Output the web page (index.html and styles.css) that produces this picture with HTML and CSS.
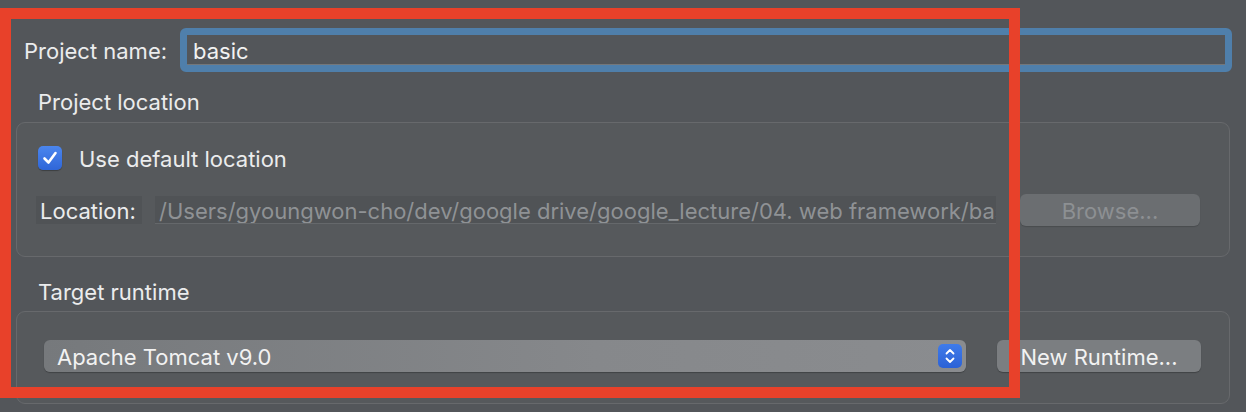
FILE: index.html
```html
<!DOCTYPE html>
<html>
<head>
<meta charset="utf-8">
<link rel="stylesheet" href="styles.css">
</head>
<body>
<div class="dialog">
  <div class="name-row">
    <span class="label">Project name:</span>
    <div class="name-input"><span>basic</span></div>
  </div>
  <div class="section-title">Project location</div>
  <div class="group group-location">
    <div class="check-row">
      <span class="checkbox">
        <svg width="24" height="24" viewBox="0 0 24 24"><path d="M6.5 12.5 L10.5 16.5 L17.5 7" fill="none" stroke="#fff" stroke-width="2.6" stroke-linecap="round" stroke-linejoin="round"/></svg>
      </span>
      <span class="check-label">Use default location</span>
    </div>
    <div class="loc-row">
      <span class="loc-label">Location:</span>
      <div class="loc-field"><span>/Users/gyoungwon-cho/dev/google drive/google_lecture/04. web framework/basic</span></div>
      <button class="btn btn-disabled">Browse...</button>
    </div>
  </div>
  <div class="section-title section-runtime">Target runtime</div>
  <div class="group group-runtime">
    <div class="runtime-row">
      <div class="select">
        <span>Apache Tomcat v9.0</span>
        <span class="stepper">
          <svg width="24" height="24" viewBox="0 0 24 24"><path d="M8.5 9.5 L12 6 L15.5 9.5 M8.5 14.5 L12 18 L15.5 14.5" fill="none" stroke="#fff" stroke-width="1.8" stroke-linecap="round" stroke-linejoin="round"/></svg>
        </span>
      </div>
      <button class="btn btn-runtime">New Runtime...</button>
    </div>
  </div>
  <div class="highlight"></div>
</div>
</body>
</html>
```
FILE: styles.css
```css
* { box-sizing: border-box; }
html, body {
  margin: 0;
  padding: 0;
  background: #53565a;
}
body {
  width: 1246px;
  height: 412px;
  overflow: hidden;
  font-family: "Inter", "Liberation Sans", sans-serif;
  font-size: 22px;
  line-height: 26px;
  color: #ebeced;
}
.dialog {
  position: relative;
  height: 412px;
  padding-top: 28px;
}
.name-row {
  display: flex;
  align-items: center;
  padding-left: 24px;
  padding-right: 14px;
  height: 44px;
}
.label {
  width: 156px;
  flex: none;
  padding-top: 1px;
}
.name-input {
  flex: 1;
  height: 44px;
  border: 7px solid #4f7fab;
  border-radius: 6px;
  background: #53565a;
  display: flex;
  align-items: center;
  padding-left: 6px;
  padding-top: 2px;
  color: #f2f2f2;
  box-shadow: inset 0 -1px 0 #74777a;
}
.section-title {
  padding-left: 38px;
  margin-top: 17px;
  height: 33px;
}
.section-runtime {
  margin-top: 22px;
  height: 32px;
}
.group {
  margin: 0 16px;
  border: 1px solid #67696c;
  border-radius: 9px;
  background: #56595c;
}
.group-location {
  height: 135px;
  padding: 23px 0 0 20px;
}
.check-row {
  display: flex;
  align-items: center;
  height: 24px;
}
.checkbox {
  width: 24px;
  height: 24px;
  border-radius: 5px;
  background: linear-gradient(#4b86ee, #2f66d8);
  box-shadow: 0 1px 1px rgba(0,0,0,0.3);
  display: flex;
  flex: none;
  margin-left: 1px;
}
.check-label {
  margin-left: 17px;
  padding-top: 2px;
}
.loc-row {
  display: flex;
  align-items: center;
  margin-top: 24px;
  height: 32px;
}
.loc-label {
  background: #505356;
  height: 28px;
  width: 106px;
  margin-left: -1px;
  padding-left: 4px;
  padding-top: 2px;
  display: flex;
  align-items: center;
  flex: none;
}
.loc-field {
  margin-left: 13px;
  width: 841px;
  height: 28px;
  background: #505356;
  border-bottom: 1px solid #65686b;
  overflow: hidden;
  white-space: nowrap;
  display: flex;
  align-items: center;
  padding-left: 4px;
  padding-top: 2px;
  color: #8f9295;
  flex: none;
}
.btn {
  font-family: "Inter", "Liberation Sans", sans-serif;
  font-size: 22px;
  border: none;
  border-radius: 6px;
  height: 32px;
  width: 180px;
  padding: 2px 0 0;
  flex: none;
}
.btn-disabled {
  margin-left: 24px;
  background: #6b6e71;
  color: #8d9093;
  box-shadow: 0 1px 1px rgba(0,0,0,0.15);
}
.group-runtime {
  height: 93px;
  padding: 28px 0 0 27px;
}
.runtime-row {
  display: flex;
  align-items: center;
}
.select {
  width: 922px;
  height: 32px;
  border-radius: 6px;
  background: linear-gradient(90deg, #76797c, #86888b 60%, #8a8c8f);
  box-shadow: 0 1px 1px rgba(0,0,0,0.25);
  display: flex;
  align-items: center;
  justify-content: space-between;
  padding: 2px 4px 0 13px;
  color: #f2f2f2;
}
.stepper {
  width: 24px;
  height: 24px;
  border-radius: 5px;
  background: linear-gradient(#3f7bea, #2c62d6);
  display: flex;
  margin-top: -2px;
}
.btn-runtime {
  margin-left: 31px;
  width: 204px;
  background: #7b7e81;
  color: #f2f2f2;
  box-shadow: 0 1px 1px rgba(0,0,0,0.25);
}
.highlight {
  position: absolute;
  left: 0;
  top: 8px;
  width: 1020px;
  height: 390px;
  border: 11px solid #e8412a;
  pointer-events: none;
}
```
